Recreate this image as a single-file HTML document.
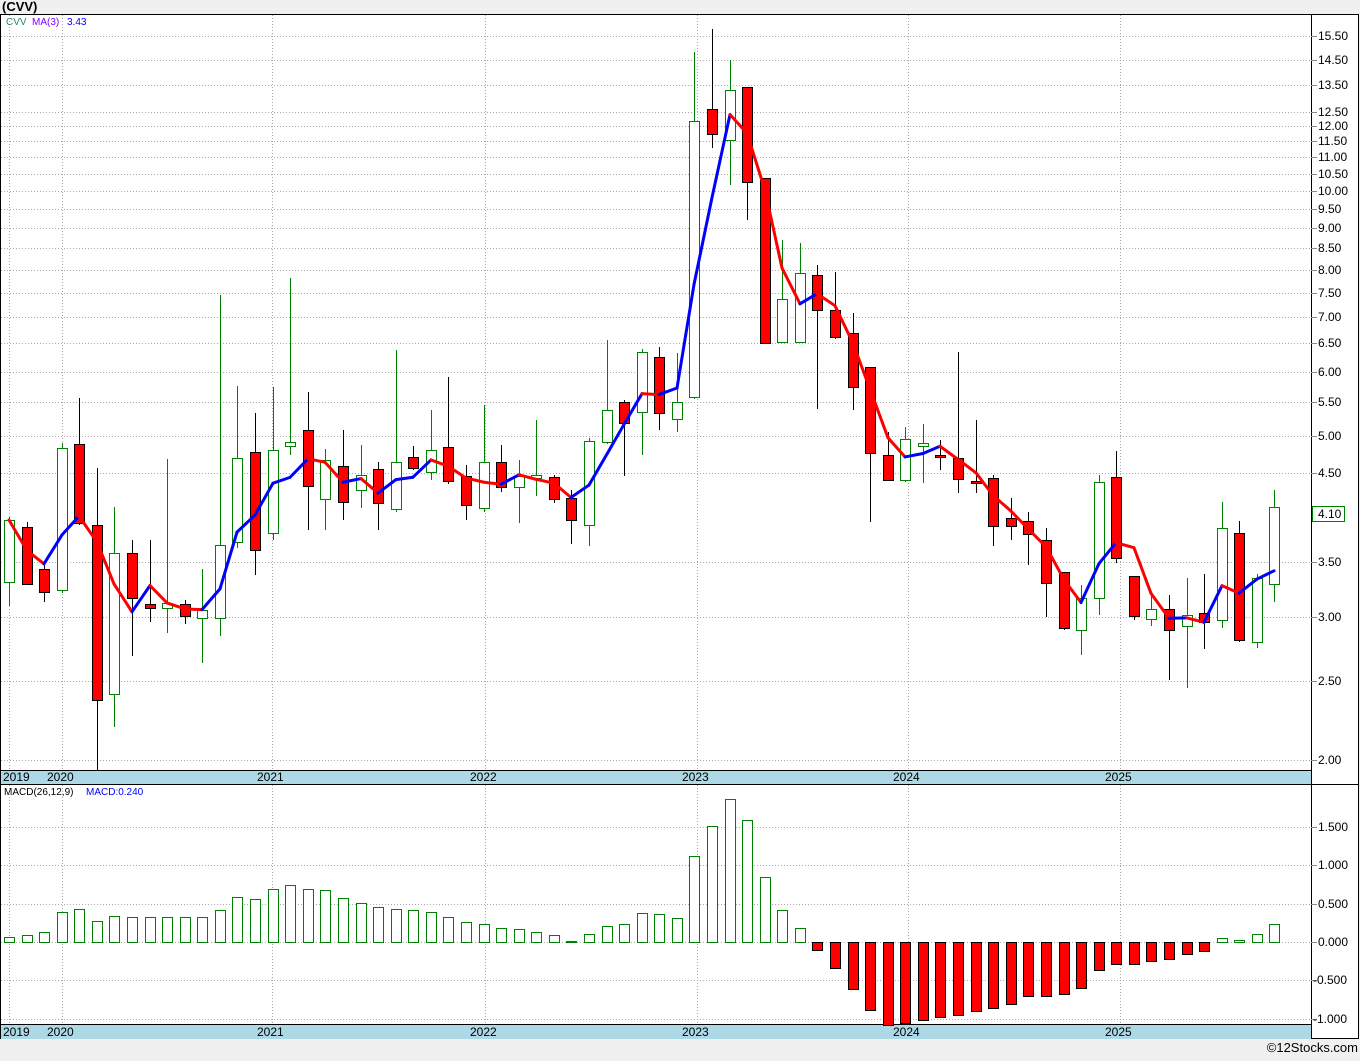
<!DOCTYPE html><html><head><style>
body{margin:0;background:#f0f0f0;font-family:"Liberation Sans",sans-serif;}
#w{position:relative;width:1360px;height:1056px;}
</style></head><body><div id="w">
<svg id="s" width="1360" height="1056" xmlns="http://www.w3.org/2000/svg" font-family="Liberation Sans, sans-serif"></svg>
</div>
<script>
const s=document.getElementById('s');let h='';
const K=353.6,Y=p=>760-K*Math.log(p/2),P=y=>2*Math.exp((760-y)/K);
h+='<text x="2" y="11" font-size="13" font-weight="bold" fill="#000">(CVV)</text>';
h+='<rect x="0.5" y="14.5" width="1358" height="1024" fill="#fff" stroke="#000"/>';
h+='<rect x="1" y="770" width="1310" height="14" fill="#add8e6"/><rect x="1" y="1024" width="1310" height="15" fill="#add8e6"/>';
h+='<line x1="0" y1="770.5" x2="1311" y2="770.5" stroke="#000"/><line x1="0" y1="784.5" x2="1359" y2="784.5" stroke="#000"/><line x1="0" y1="1024.5" x2="1311" y2="1024.5" stroke="#000"/>';
h+='<line x1="1311.5" y1="14" x2="1311.5" y2="1039" stroke="#000"/>';
const yrs=[[9,'2019'],[62,'2020'],[272,'2021'],[485,'2022'],[697,'2023'],[908,'2024'],[1120,'2025']];
yrs.forEach(([x,t],i)=>{h+=`<line x1="${x}.5" y1="15" x2="${x}.5" y2="770" stroke="#aaa" stroke-dasharray="1,2"/><line x1="${x}.5" y1="785" x2="${x}.5" y2="1024" stroke="#aaa" stroke-dasharray="1,2"/>`;
const lx=i==0?3:x-15;h+=`<text x="${lx}" y="781" font-size="12">${t}</text><text x="${lx}" y="1036" font-size="12">${t}</text>`;});
const pl=[15.5,14.5,13.5,12.5,12,11.5,11,10.5,10,9.5,9,8.5,8,7.5,7,6.5,6,5.5,5,4.5,3.5,3,2.5,2];
pl.forEach(p=>{const y=Math.round(Y(p));h+=`<line x1="1" y1="${y}.5" x2="1311" y2="${y}.5" stroke="#aaa" stroke-dasharray="1,2"/><line x1="1311" y1="${y}.5" x2="1317" y2="${y}.5" stroke="#888"/><text x="1318" y="${y+4}" font-size="12">${p.toFixed(2)}</text>`;});
[[1.5,'1.500'],[1,'1.000'],[.5,'0.500'],[0,'0.000'],[-.5,'-0.500'],[-1,'-1.000']].forEach(([v,t])=>{const y=Math.round(942-76.7*v);h+=`<line x1="1" y1="${y}.5" x2="1311" y2="${y}.5" stroke="#aaa" stroke-dasharray="1,2"/><line x1="1311" y1="${y}.5" x2="1317" y2="${y}.5" stroke="#888"/><text x="${t[0]=='-'?1313:1318}" y="${y+4}" font-size="12">${t}</text>`;});
const d=[[520,582,517,606,1],[527,584,522,585,0],[569,592,565,602,0],[448,590,443,593,1],[444,523,398,525,0],[525,700,468,770,0],[553,694,507,727,1],[553,598,540,656,0],[604,608,540,622,0],[603,608,459,633,1],[604,616,600,624,0],[610,618,569,663,1],[545,618,295,636,1],[458,542,386,548,1],[452,550,413,575,0],[450,533,387,540,1],[442,446,278,455,1],[430,486,392,530,0],[460,499,449,530,1],[466,502,430,520,0],[475,490,445,508,1],[469,503,462,530,0],[462,509,350,512,1],[457,468,446,470,0],[450,472,410,480,1],[447,481,377,484,0],[476,505,465,520,0],[462,508,405,512,1],[462,487,445,492,0],[476,487,460,523,1],[475,478,420,496,1],[477,499,475,503,0],[498,520,490,544,0],[441,525,438,546,1],[410,442,340,444,1],[402,423,400,476,0],[352,412,349,455,1],[357,413,347,430,0],[402,419,353,432,1],[121,397,52,399,1],[109,134,29,148,0],[90,140,60,185,1],[87,182,87,220,0],[178,343,178,344,0],[299,342,240,342,1],[273,342,243,343,1],[275,310,265,409,0],[310,337,272,339,0],[333,387,313,410,0],[367,453,367,522,0],[455,480,432,481,0],[439,480,427,482,1],[443,446,424,483,1],[455,457,440,470,0],[458,479,352,493,0],[481,483,420,493,0],[478,526,475,546,0],[518,526,498,540,0],[521,534,512,565,0],[540,583,528,617,0],[572,628,572,630,0],[598,630,585,655,1],[482,598,475,615,1],[477,558,451,563,0],[576,616,576,620,0],[609,619,592,626,1],[609,630,595,680,0],[615,626,578,688,1],[613,622,574,649,0],[528,620,502,628,1],[533,640,521,642,0],[578,642,574,648,1],[507,584,490,602,1]];
const X=i=>Math.round(9+17.575*i);
const closes=d.map(c=>P(c[4]?c[0]:c[1]));
let ma=[];closes.forEach((c,i)=>{const a=closes.slice(Math.max(0,i-2),i+1);ma.push(Y(a.reduce((x,y)=>x+y)/a.length));});
d.forEach((c,i)=>{const x=X(i),col=c[4]?'#008000':'#000';h+=`<line x1="${x}.5" y1="${c[2]}" x2="${x}.5" y2="${c[3]}" stroke="${col}"/>`;
h+=`<rect x="${x-5}.5" y="${c[0]}.5" width="10" height="${Math.max(1,c[1]-c[0])}" fill="${c[4]?'#fff':'#f00'}" stroke="${col}"/>`;});
for(let i=1;i<ma.length;i++){const col=ma[i]<ma[i-1]?'#00f':'#f00';h+=`<line x1="${X(i-1)}" y1="${ma[i-1]}" x2="${X(i)}" y2="${ma[i]}" stroke="${col}" stroke-width="3" stroke-linecap="round"/>`;}
const m=[937,935,932,912,909,921,916,917,917,917,917,917,910,897,899,889,885,889,890,898,903,907,909,910,912,917,922,924,928,929,932,935,941,934,926,924,913,914,918,856,826,799,820,877,910,928,950,968,989,1010,1025,1023,1020,1017,1015,1011,1008,1004,996,996,994,988,970,964,964,961,959,954,951,938,940,934,924];
m.forEach((v,i)=>{const x=X(i);if(v<942)h+=`<rect x="${x-5}.5" y="${v}.5" width="10" height="${942-v}" fill="#fff" stroke="#008000"/>`;else h+=`<rect x="${x-5}.5" y="942.5" width="10" height="${v-942}" fill="#f00" stroke="#000"/>`;});
h+='<rect x="1312.5" y="506.5" width="32" height="15" fill="#fff" stroke="#008000"/><text x="1318" y="518" font-size="12">4.10</text>';
h+='<text x="6" y="25" font-size="10" fill="#2a8a6a">CVV</text><text x="32" y="25" font-size="10" fill="#8000ff">MA(3)</text><text x="67" y="25" font-size="10" fill="#00f">3.43</text>';
h+='<text x="4" y="795" font-size="10">MACD(26,12,9)</text><text x="86" y="795" font-size="10" fill="#00f">MACD:0.240</text>';
h+='<text x="1358" y="1052" font-size="13" text-anchor="end">©12Stocks.com</text>';
s.innerHTML=h;
</script></body></html>
